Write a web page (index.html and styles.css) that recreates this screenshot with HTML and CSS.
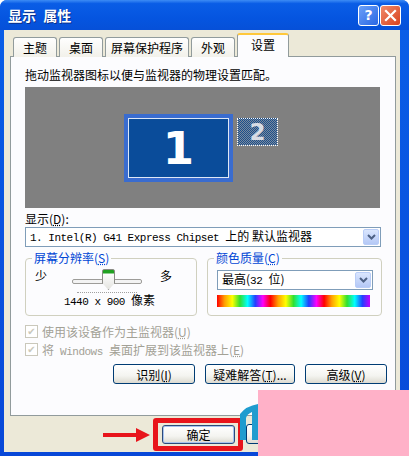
FILE: index.html
```html
<!DOCTYPE html>
<html lang="zh-CN">
<head>
  <meta charset="UTF-8">
  <title>显示 属性</title>
  <link rel="stylesheet" href="styles.css">
</head>
<body>
  <div class="window">
    <div class="titlebar">
      <span class="title">显示 属性</span>
      <div class="title-buttons">
        <span class="tbtn help">?</span>
        <span class="tbtn close">
          <svg width="13" height="13" viewBox="0 0 13 13"><path d="M2 2 L11 11 M11 2 L2 11" stroke="#fff" stroke-width="2.2" stroke-linecap="square"/></svg>
        </span>
      </div>
    </div>

    <div class="body">
      <div class="tabs">
        <span class="tab">主题</span>
        <span class="tab">桌面</span>
        <span class="tab">屏幕保护程序</span>
        <span class="tab">外观</span>
        <span class="tab active">设置</span>
      </div>

      <div class="panel">
        <p class="hint">拖动监视器图标以便与监视器的物理设置匹配。</p>

        <div class="monitors">
          <div class="mon mon1"><div class="mon-inner">1</div></div>
          <div class="mon mon2">2</div>
        </div>

        <p class="label">显示(<u>D</u>):</p>
        <div class="select wide">
          <span class="select-text"><span class="mono">1. Intel(R) G41 Express Chipset </span>上的 默认监视器</span>
          <span class="drop"><svg width="9" height="6" viewBox="0 0 9 6"><path d="M1 1 L4.5 4.5 L8 1" fill="none" stroke="#4d6185" stroke-width="2"/></svg></span>
        </div>

        <div class="groups">
          <div class="group">
            <span class="legend">屏幕分辨率(<u>S</u>)</span>
            <div class="slider-row">
              <span>少</span>
              <div class="slider">
                <div class="track"></div>
                <div class="thumb"></div>
                <div class="ticks"></div>
              </div>
              <span>多</span>
            </div>
            <p class="res"><span class="mono">1440 x 900 </span>像素</p>
          </div>
          <div class="group">
            <span class="legend">颜色质量(<u>C</u>)</span>
            <div class="select small">
              <span class="select-text">最高(<span class="mono">32 </span>位)</span>
              <span class="drop"><svg width="9" height="6" viewBox="0 0 9 6"><path d="M1 1 L4.5 4.5 L8 1" fill="none" stroke="#4d6185" stroke-width="2"/></svg></span>
            </div>
            <div class="spectrum"></div>
          </div>
        </div>

        <div class="check first"><span class="box">✔</span><span>使用该设备作为主监视器(<u>U</u>)</span></div>
        <div class="check"><span class="box">✔</span><span>将<span class="mono"> Windows </span>桌面扩展到该监视器上(<u>E</u>)</span></div>

        <div class="panel-buttons">
          <span class="btn">识别(<u>I</u>)</span>
          <span class="btn">疑难解答(<u>T</u>)...</span>
          <span class="btn">高级(<u>V</u>)</span>
        </div>
      </div>

      <div class="footer">
        <svg class="arrow" width="47" height="14" viewBox="0 0 47 14"><path d="M0 5 H33 V0 L47 7 L33 14 V9 H0 Z" fill="#e8141b"/></svg>
        <div class="ok-ring"><span class="btn ok">确定</span></div>
        <span class="btn cancel">取消</span>
      </div>
    </div>

    <svg class="teal" width="20" height="36" viewBox="0 0 20 36"><path d="M0 10 Q6 2 18 0 V36 H12 V8 Q7 10 6 14 V36 H0 Z" fill="#1f9ccf"/></svg>
    <div class="pink"></div>
  </div>
</body>
</html>
```

FILE: styles.css
```css
html, body {
  margin: 0;
  padding: 0;
  background: #ffffff;
}

body {
  font-family: "Noto Sans CJK SC", "DejaVu Sans", sans-serif;
  font-size: 12px;
  color: #000;
}

p {
  margin: 0;
}

u {
  text-decoration: underline dotted;
}

.mono {
  font-family: "Liberation Mono", "Noto Sans CJK SC", monospace;
  font-size: 11px;
  letter-spacing: -0.5px;
  white-space: pre;
}

.window {
  position: relative;
  width: 409px;
  height: 456px;
  background: linear-gradient(to bottom, #0a5fe8, #0848d8);
  border-radius: 7px 7px 0 0;
  display: flex;
  flex-direction: column;
  overflow: hidden;
}

.titlebar {
  height: 30px;
  flex: none;
  display: flex;
  align-items: center;
  justify-content: space-between;
  padding: 0 8px 0 8px;
  background: linear-gradient(to bottom, #3d8cf5 0%, #0a5de6 12%, #0555e0 60%, #0650d8 100%);
}

.title {
  color: #fff;
  font-weight: bold;
  font-size: 14px;
  word-spacing: 4px;
  text-shadow: 1px 1px 0 #0a2f8a;
}

.title-buttons {
  display: flex;
  gap: 1px;
}

.tbtn {
  width: 19px;
  height: 19px;
  border: 1px solid #fff;
  border-radius: 3px;
  display: flex;
  align-items: center;
  justify-content: center;
  color: #fff;
  font-family: "DejaVu Sans", sans-serif;
  font-weight: bold;
  font-size: 14px;
}

.help {
  background: linear-gradient(135deg, #6aa0f8, #2a66e4);
}

.close {
  background: linear-gradient(135deg, #f08a6a, #d8421e);
}

.body {
  flex: 1;
  margin: 0 9px 4px 4px;
  background: #ece9d8;
  display: flex;
  flex-direction: column;
  padding: 3px 0 0 6px;
}

.tabs {
  display: flex;
  align-items: flex-end;
  gap: 2px;
  padding-left: 3px;
  height: 24px;
  position: relative;
  z-index: 1;
  margin-bottom: -1px;
}

.tab {
  height: 20px;
  line-height: 19px;
  padding: 0 5px;
  border: 1px solid #919b9c;
  border-bottom: none;
  border-radius: 3px 3px 0 0;
  background: linear-gradient(to bottom, #fefefe, #f2f1ea);
  font-size: 12px;
  box-sizing: border-box;
  min-width: 44px;
  text-align: center;
}

.tab.active {
  height: 24px;
  min-width: 52px;
  padding: 0 10px;
  background: #fcfcfe;
  border-top: 2px solid #ffc83c;
  line-height: 19px;
}

.panel {
  width: 386px;
  height: 360px;
  box-sizing: border-box;
  border: 1px solid #919b9c;
  background: #fcfcfe;
  padding: 9px 15px 0 14px;
  display: flex;
  flex-direction: column;
}

.hint {
  height: 21px;
  line-height: 17px;
  font-size: 12px;
}

.monitors {
  height: 121px;
  flex: none;
  background: #808080;
  display: flex;
  align-items: flex-start;
  padding: 27px 0 0 99px;
  box-sizing: border-box;
  gap: 4px;
}

.mon1 {
  width: 109px;
  height: 68px;
  background: #3a6ccf;
  padding: 4px;
  box-sizing: border-box;
}

.mon-inner {
  height: 100%;
  border: 1px solid #dfe8f6;
  background: #0a4c9a;
  box-sizing: border-box;
  color: #fff;
  font-family: "DejaVu Sans", sans-serif;
  font-weight: bold;
  font-size: 45px;
  line-height: 60px;
  text-align: center;
}

.mon2 {
  width: 41px;
  height: 28px;
  margin-top: 4px;
  box-sizing: border-box;
  border: 1px dotted #ffffff;
  background-color: #4a6a90;
  background-image: repeating-conic-gradient(#1b4e8c 0 25%, #7a8a9c 0 50%);
  background-size: 2px 2px;
  color: #d8dce4;
  font-family: "DejaVu Sans", sans-serif;
  font-weight: bold;
  font-size: 23px;
  line-height: 26px;
  text-align: center;
}

.label {
  height: 19px;
  line-height: 22px;
  font-size: 12px;
}

.select {
  display: flex;
  align-items: center;
  justify-content: space-between;
  border: 1px solid #7f9db9;
  background: #fff;
  box-sizing: border-box;
  padding: 1px 1px 1px 4px;
}

.select.wide {
  height: 20px;
  width: 356px;
}

.select-text {
  font-size: 12px;
  line-height: 16px;
  white-space: nowrap;
}

.drop {
  width: 16px;
  height: 16px;
  background: linear-gradient(to bottom, #dae6fe, #b4c8f6);
  border: 1px solid #b9cdf7;
  border-radius: 2px;
  box-sizing: border-box;
  display: flex;
  align-items: center;
  justify-content: center;
}

.groups {
  display: flex;
  gap: 10px;
  margin-top: 11px;
  width: 357px;
}

.group {
  position: relative;
  flex: 1;
  height: 58px;
  border: 1px solid #d0d0bf;
  border-radius: 4px;
  box-sizing: border-box;
  padding: 10px 8px 0 9px;
}

.legend {
  position: absolute;
  top: -8px;
  left: 6px;
  padding: 0 2px;
  background: #fcfcfe;
  color: #0046d5;
  font-size: 12px;
  line-height: 14px;
}

.slider-row {
  display: flex;
  align-items: flex-start;
  justify-content: space-between;
  height: 24px;
  padding-right: 16px;
  line-height: 14px;
}

.slider {
  position: relative;
  width: 85px;
  height: 24px;
}

.track {
  position: absolute;
  left: 11px;
  right: 4px;
  top: 10px;
  height: 3px;
  border: 1px solid #9d9c99;
  border-radius: 2px;
  background: #f3f3f3;
}

.thumb {
  position: absolute;
  left: 41px;
  top: 0;
  width: 11px;
  height: 19px;
  background: linear-gradient(to bottom, #21a121 0, #21a121 3px, #fdfdfd 4px, #e4e4e0 100%);
  border: 1px solid #8b8b85;
  border-radius: 2px 2px 0 0;
  clip-path: polygon(0 0, 100% 0, 100% 65%, 50% 100%, 0 65%);
}

.ticks {
  position: absolute;
  left: 16px;
  right: 9px;
  top: 23px;
  border-top: 1px dotted #a0a0a0;
}

.res {
  text-align: center;
  padding-right: 4px;
  line-height: 14px;
}

.select.small {
  width: 156px;
  height: 20px;
  margin-top: 1px;
}

.spectrum {
  width: 153px;
  height: 12px;
  margin-top: 5px;
  background: linear-gradient(to right,
    #ff0000, #ffa000, #ffff00, #30e030, #00ffff, #2040ff, #ff00ff,
    #ff0000, #ffa000, #ffff00, #30e030, #00ffff, #2040ff, #ff00ff,
    #ff0000, #ffa000, #ffff00, #30e030, #00ffff, #2040ff, #c000ff);
}

.check {
  display: flex;
  align-items: center;
  gap: 4px;
  color: #a3a196;
  height: 18px;
}

.check.first {
  margin-top: 6px;
}

.box {
  width: 11px;
  height: 11px;
  border: 1px solid #cac8bb;
  background: #fff;
  color: #cac8bb;
  font-size: 10px;
  line-height: 11px;
  text-align: center;
  font-family: "DejaVu Sans", sans-serif;
}

.panel-buttons {
  display: flex;
  justify-content: flex-end;
  gap: 10px;
  margin-top: 6px;
  width: 362px;
}

.btn {
  display: inline-flex;
  align-items: center;
  justify-content: center;
  height: 20px;
  box-sizing: border-box;
  border: 1px solid #003c74;
  border-radius: 3px;
  background: linear-gradient(to bottom, #ffffff, #f4f4f0 60%, #dcdad0);
  font-size: 12px;
  white-space: nowrap;
}

.panel-buttons .btn {
  width: 82px;
}

.panel-buttons .btn:nth-child(2) {
  width: 90px;
}

.footer {
  display: flex;
  align-items: center;
  height: 36px;
  padding-left: 93px;
}

.arrow {
  margin-right: 3px;
  margin-top: 1px;
}

.ok-ring {
  border: 5px solid #e8141b;
  border-radius: 3px;
  padding: 2px 3px 2px 4px;
  display: flex;
}

.ok {
  width: 73px;
  height: 19px;
  border-color: #2c4a7a;
  box-shadow: inset 0 0 0 1px #a8c4ef;
}

.cancel {
  width: 73px;
  margin-left: 3px;
}

.teal {
  position: absolute;
  left: 240px;
  top: 404px;
}

.pink {
  position: absolute;
  left: 258px;
  top: 390px;
  width: 151px;
  height: 68px;
  background: #ffb1c8;
}
```
